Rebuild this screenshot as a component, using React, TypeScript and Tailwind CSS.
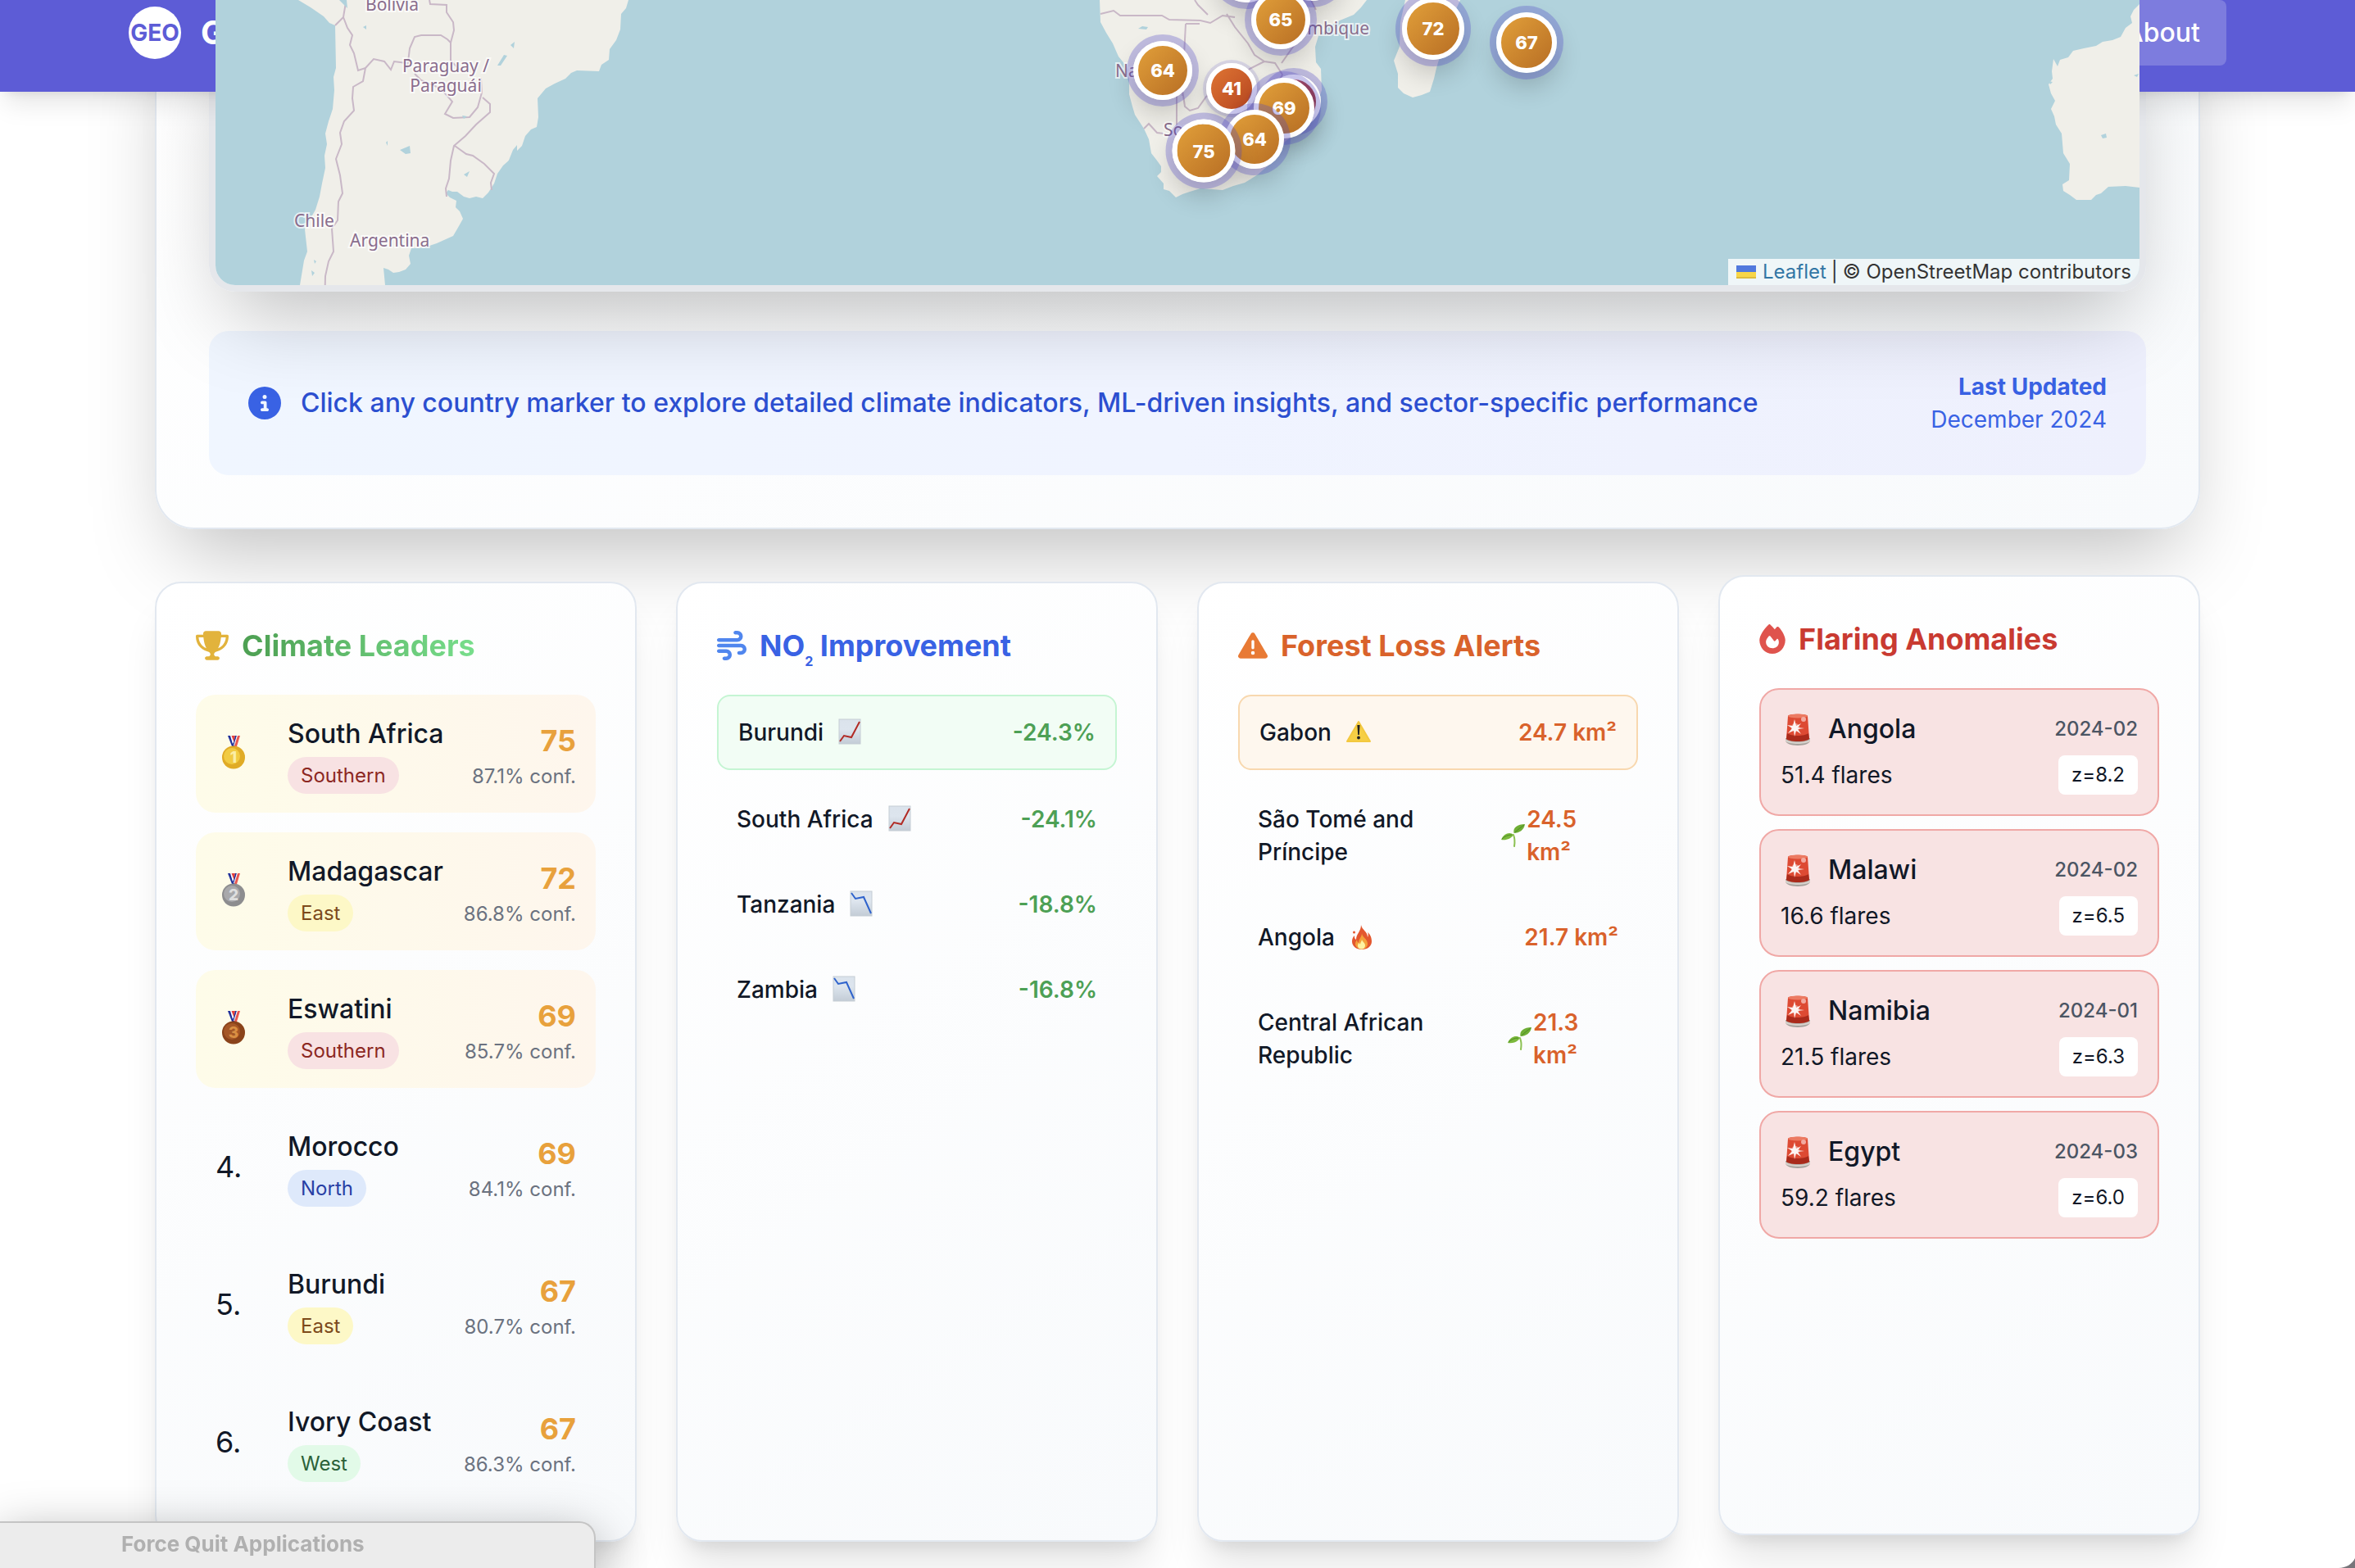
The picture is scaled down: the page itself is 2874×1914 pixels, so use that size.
import { FaCircleInfo, FaFire, FaTriangleExclamation, FaTrophy, FaWind } from 'react-icons/fa6';
import type { ReactNode } from 'react';

const leaders = [
  { rank: 1, name: 'South Africa', region: 'Southern', score: 75, conf: '87.1%' },
  { rank: 2, name: 'Madagascar', region: 'East', score: 72, conf: '86.8%' },
  { rank: 3, name: 'Eswatini', region: 'Southern', score: 69, conf: '85.7%' },
  { rank: 4, name: 'Morocco', region: 'North', score: 69, conf: '84.1%' },
  { rank: 5, name: 'Burundi', region: 'East', score: 67, conf: '80.7%' },
  { rank: 6, name: 'Ivory Coast', region: 'West', score: 67, conf: '86.3%' },
];

const regionStyles: Record<string, string> = {
  Southern: 'bg-[#f8e2e3] text-[#8c2822]',
  East: 'bg-[#fdf8c7] text-[#7c4a1b]',
  North: 'bg-[#dee9fb] text-[#2840a5]',
  West: 'bg-[#e2fae8] text-[#2b6138]',
};

const no2 = [
  { name: 'Burundi', value: '-24.3%', icon: <ChartUp /> },
  { name: 'South Africa', value: '-24.1%', icon: <ChartUp /> },
  { name: 'Tanzania', value: '-18.8%', icon: <ChartDown /> },
  { name: 'Zambia', value: '-16.8%', icon: <ChartDown /> },
];

const forest = [
  { name: 'Gabon', value: '24.7 km²', icon: <Warning /> },
  { name: 'São Tomé and Príncipe', value: '24.5 km²', icon: <Seedling /> },
  { name: 'Angola', value: '21.7 km²', icon: <Flame /> },
  { name: 'Central African Republic', value: '21.3 km²', icon: <Seedling /> },
];

const flares = [
  { name: 'Angola', date: '2024-02', count: '51.4', z: '8.2' },
  { name: 'Malawi', date: '2024-02', count: '16.6', z: '6.5' },
  { name: 'Namibia', date: '2024-01', count: '21.5', z: '6.3' },
  { name: 'Egypt', date: '2024-03', count: '59.2', z: '6.0' },
];

// Marker centres are measured from the middle of the map
const markers = [
  { x: 84, y: -33, size: 72, score: '', tone: 'mid' },
  { x: 164, y: -35, size: 72, score: '', tone: 'mid' },
  { x: 126, y: 24, size: 72, score: '65', tone: 'mid' },
  { x: 312, y: 35, size: 76, score: '72', tone: 'mid' },
  { x: 426, y: 52, size: 74, score: '67', tone: 'mid' },
  { x: -18, y: 86, size: 72, score: '64', tone: 'mid' },
  { x: 66, y: 108, size: 62, score: '41', tone: 'low' },
  { x: 142, y: 124, size: 66, score: '', tone: 'bad' },
  { x: 130, y: 132, size: 74, score: '69', tone: 'mid' },
  { x: 94, y: 170, size: 72, score: '64', tone: 'mid' },
  { x: 32, y: 184, size: 77, score: '75', tone: 'mid' },
];

const markerTones: Record<string, string> = {
  mid: 'from-[#e5a43c] to-[#b46a22] shadow-[0_0_0_8px_rgba(79,70,200,0.3),0_16px_32px_rgba(0,0,0,0.2)]',
  low: 'from-[#e37a35] to-[#b2401f] shadow-[0_0_0_4px_rgba(79,70,200,0.15),0_8px_16px_rgba(0,0,0,0.2)]',
  bad: 'from-[#d0524a] to-[#8f2d28] shadow-[0_0_0_8px_rgba(79,70,200,0.3),0_16px_32px_rgba(0,0,0,0.2)]',
};

function Medal({ place }: { place: number }) {
  const fills = ['#e0ab26', '#8d8d8f', '#8a431a'];
  const lights = ['#f8d94e', '#b4b4b6', '#b0602c'];
  const digits = ['#fbeea6', '#dedede', '#d98f43'];
  return (
    <svg viewBox="0 0 44 44" className="size-11" role="img" aria-label={`Place ${place}`}>
      <path d="M15 0h4l4 13h-3z" fill="#20309b" />
      <path d="M18 0h3l2 6-2 4z" fill="#fff" />
      <path d="M19.500 0H24l-1.500 8z" fill="#e4403c" />
      <path d="M24 0h2l-3 13h-2z" fill="#20309b" />
      <path d="M26 0h1l-4 12h-1z" fill="#fff" />
      <path d="M27 0h3l-4 13h-3z" fill="#ea5750" />
      <circle cx="22" cy="26.500" r="14" fill={fills[place - 1]} />
      <circle cx="20" cy="25" r="10" fill={lights[place - 1]} opacity="0.7" />
      <text x="22" y="33" textAnchor="middle" fontFamily="Inter, sans-serif" fontWeight="800" fontSize="19" fill={digits[place - 1]}>
        {place}
      </text>
    </svg>
  );
}

function ChartSheet({ children }: { children: ReactNode }) {
  return (
    <svg viewBox="2 1 34 36" className="h-9 w-[34px] shrink-0" aria-hidden="true">
      <defs>
        <linearGradient id="sheet" x1="0" y1="0" x2="0" y2="1">
          <stop offset="0" stopColor="#dbe3ec" />
          <stop offset="0.4" stopColor="#dde5ee" />
          <stop offset="1" stopColor="#c3ccd6" />
        </linearGradient>
      </defs>
      <rect x="5" y="3" width="26" height="30" fill="url(#sheet)" stroke="#c5cdd4" strokeWidth="1" />
      {children}
    </svg>
  );
}

function ChartUp() {
  return (
    <ChartSheet>
      <path d="M6 30 11 23l9 2L30 6" fill="none" stroke="#b12b26" strokeWidth="2" />
    </ChartSheet>
  );
}

function ChartDown() {
  return (
    <ChartSheet>
      <path d="M6 5l5 7 10-2 9 20" fill="none" stroke="#2f63cc" strokeWidth="2" />
    </ChartSheet>
  );
}

function Warning() {
  return (
    <svg viewBox="1 0 34 36" className="h-9 w-[34px] shrink-0" aria-hidden="true">
      <path d="M18 5 32 29H4z" fill="#f6cf45" stroke="#f3c83f" strokeWidth="2" strokeLinejoin="round" />
      <path d="M16.4 9h3.2l-.8 12h-1.6z" fill="#222" />
      <circle cx="18" cy="24.500" r="1.900" fill="#222" />
    </svg>
  );
}

function Seedling() {
  return (
    <svg viewBox="1 0 34 36" className="h-9 w-[34px] shrink-0" aria-hidden="true">
      <path d="M20 31c1-6 1-9-1-14" fill="none" stroke="#8cc152" strokeWidth="2" strokeLinecap="round" />
      <path d="M19.500 15C18 8 24 4 33 4c-1 7-7 11-13.500 11z" fill="#6fae35" />
      <path d="M21 14c4-4 7-6 11-9" stroke="#4d8c24" strokeWidth="1" fill="none" />
      <path d="M19 17c-4-4-12-2-15 6 6 1 12-1 15-6z" fill="#7cb93c" />
      <path d="M17 17c-5 0-9 2-12 5" stroke="#4d8c24" strokeWidth="1" fill="none" />
    </svg>
  );
}

function Flame() {
  return (
    <svg viewBox="1 0 34 36" className="h-9 w-[34px] shrink-0" aria-hidden="true">
      <path d="M17 3c1 6 8 8 8 15 1-2 1-4 0-6 4 3 5 8 5 11 0 6-5 10-12 10S6 29 6 23c0-3 1-5 3-7 0 2 0 4 2 5 0-7 6-10 6-18z" fill="#e3572f" />
      <circle cx="8.500" cy="12" r="1.500" fill="#e3572f" />
      <path d="M18 13c0 5 7 7 7 13 0 4-3 6.500-7 6.500S10 30 10 26c0-2 1-3 2-5 0 2 1 3 2 4 0-5 4-7 4-12z" fill="#f4a03a" />
      <path d="M18 21c1 3 4 4 4 7s-2 4.500-4.500 4.500S13 31 13 28.500c0-2 1-3 1.500-4 0 1 1 2 1.500 2 0-2 1.500-3 2-5.500z" fill="#fdf3a3" />
    </svg>
  );
}

function Siren() {
  return (
    <svg viewBox="-1 0 42 44" className="h-11 w-[42px] shrink-0" aria-hidden="true">
      <path d="M5 33h30v3c0 3-6 6-15 6S5 39 5 36z" fill="#a5a19c" />
      <path d="M5 34c5 5 25 5 30 0v3c-5 4-25 4-30 0z" fill="#d5d0ca" />
      <path d="M8 6c0-3 24-3 24 0l2 28c-5 4-23 4-28 0z" fill="#dd4a33" />
      <path d="M7 27l-1 7c5 4 23 4 28 0l-1-7c-5 4-21 4-26 0z" fill="#a92a1b" />
      <ellipse cx="20" cy="6" rx="12" ry="2.500" fill="#ec7a62" />
      <circle cx="27" cy="10" r="3" fill="#f2aaa0" />
      <path d="M16 10l2 8 6-3-4 5 8 1-8 1 4 6-6-4-2 7-1-7-7 3 5-6-6-4 7 1z" fill="#fff" opacity="0.9" />
      <circle cx="17" cy="20" r="5" fill="#fff" opacity="0.4" />
    </svg>
  );
}

function WorldMap() {
  return (
    <svg
      viewBox="263 0 2348 348"
      preserveAspectRatio="xMidYMax slice"
      className="block h-[348px] w-full"
      role="img"
      aria-label="Map of the southern hemisphere"
    >
      <rect x="0" y="0" width="2874" height="348" fill="#b1d2dc" />
      <g fill="#f0efe9">
        <path d="M364 0 379 9 395 20 402 28 409 31 410 83 407 94 408 110 406 133 401 148 397 163 399 176 396 190 397 205 393 224 390 240 385 256 381 263 372 280 375 307 371 318 369 330 366 348H470L468 327 474 329 480 333 487 332 495 329 501 322 499 312 502 303 518 302 533 297 553 288 560 276 565 267 561 258 556 253 557 245 549 241 544 236 547 232 552 234 558 234 566 240 573 242 581 240 589 242 596 235 603 224 607 212 614 202 622 195 631 184 637 178 641 166 648 158 655 155 657 143 656 120 666 108 677 102 690 96 697 89 704 86 731 87 734 79 743 73 744 60 752 49 757 36 758 17 764 10 767 0Z" />
        <path d="M1342 0 1343 27 1350 40 1358 53 1365 69 1374 80 1378 96 1378 115 1382 130 1385 140 1396 157 1402 170 1405 187 1412 196 1417 203 1417 210 1412 215 1420 224 1420 231 1427 233 1435 241 1443 237 1452 234 1465 230 1492 232 1505 227 1519 223 1535 213 1550 200 1560 187 1568 173 1585 160 1598 145 1607 128 1613 110 1612 84 1606 76 1605 57 1609 44 1621 33 1635 25 1652 18 1661 9 1668 0Z" />
        <path d="M1715 0 1709 27 1708 57 1701 74 1706 90 1706 107 1713 114 1724 119 1735 116 1745 112 1750 96 1753 83 1763 50 1773 20 1782 0Z" />
        <path d="M2611 5 2604 12 2600 20 2602 28 2594 34 2588 45 2578 49 2566 51 2558 56 2543 59 2530 62 2524 70 2514 73 2511 81 2506 72 2504 87 2505 96 2500 103 2503 114 2508 123 2503 133 2507 142 2509 152 2516 163 2518 187 2526 200 2525 220 2517 225 2518 233 2526 238 2534 244 2552 244 2558 238 2564 236 2573 228 2594 227 2611 229Z" />
      </g>
      <g fill="none" stroke="#c9b8c7" strokeWidth="2">
        <path d="M409 31l10-10 3-18-5-3M419 21l5 13 6 9-3 12 5 10 5 21 9-3-3 16-12 7-1 14 2 15-12 13-5 14 2 14-7 18 5 20 3 22-5 10-1 23-7 10 2 28-6 12-4 18-1 43" />
        <path d="M446 83 456 72l13 3 8 10 4-10 15 2M524 0l1 5 20 1v9l8 12 1 10-4 15-4-4-8-5H514l-8 2-6 14-3 25M550 52v22l12 12M506 90l8 8 24 10 14 16-9 15 10 5 20-1 10-12 5-18-1-18M589 119l9 8v10l-17 15-13 14-14 12-4 18-2 22-4 12 1 10M555 178l14 10 8 2 14 10 12 12-4 11 1 9" />
        <path d="M1343 17l16-4 8 6h51l9 5 38 1 12 3 15-9 15 2M1458 0l4 6 12 12M1447 29h17M1447 29l-2 38-2 50M1443 110l3 20 6 5 10-3 10-14 8-5M1436 115v43M1396 157l6-6 10 11 8 1M1497 17l10 16 16 20 8 14 12 8 13 2 9 14-3 6M1543 75l-18 9-12 15M1564 77l14-20 5-17M1606 12l-6-12" />
      </g>
      <g fill="#b1d2dc">
        <path d="M414 0l10 10-1-10zM488 183l12-5 1 9-6 1zM443 33l4-2v5zM471 174l2-2v6zM607 80l8-13 4 1-8 12zM623 55l5-4-1 8zM570 142l-6-1 2 4zM626 183l5-6v9l-9 14-2-2zM566 213l7-4-3 7zM383 317l3 2-2 3zM380 330l4 3-3 4zM1389 35l5-3 7 1-2 3zM2604 92l6-2-2 4zM2564 165l6-2 1 5-5 1zM2500 99l5 1-3 3z" />
      </g>
      <g
        fill="#8a6d8d"
        stroke="#ffffff"
        strokeOpacity="0.7"
        strokeWidth="4"
        paintOrder="stroke"
        fontFamily="'Noto Sans', sans-serif"
        fontSize="21"
      >
        <text x="446" y="13">Bolivia</text>
        <text x="544" y="88" textAnchor="middle">Paraguay /</text>
        <text x="544" y="112" textAnchor="middle">Paraguái</text>
        <text x="359" y="277">Chile</text>
        <text x="427" y="301">Argentina</text>
        <text x="1361" y="94">Namibia</text>
        <text x="1420" y="166">South</text>
        <text x="1671" y="42" textAnchor="end">Mozambique</text>
      </g>
    </svg>
  );
}

function Card({ icon, title, titleClass, className = '', children }: {
  icon: ReactNode;
  title: ReactNode;
  titleClass: string;
  className?: string;
  children: ReactNode;
}) {
  return (
    <section
      className={`rounded-[32px] border-2 border-[#e2e8f0] bg-linear-145 from-white to-[#f8fafc] p-12 shadow-[0_40px_50px_-10px_rgba(0,0,0,0.1),0_16px_20px_-12px_rgba(0,0,0,0.1)] ${className}`}
    >
      <h3 className="mb-8 flex items-center gap-4 text-[36px] leading-[56px] font-bold">
        {icon}
        <span className={titleClass}>{title}</span>
      </h3>
      {children}
    </section>
  );
}

function StatList({ rows, firstClass, valueClass }: {
  rows: { name: string; value: string; icon: ReactNode }[];
  firstClass: string;
  valueClass: string;
}) {
  return (
    <ul className="space-y-4">
      {rows.map((row, i) => (
        <li
          key={row.name}
          className={`flex items-center justify-between rounded-2xl p-6 text-[28px] leading-10 ${i === 0 ? firstClass : ''}`}
        >
          <div className="flex items-center gap-4 font-medium">
            <span>{row.name}</span>
            {row.icon}
          </div>
          <span className={valueClass}>{row.value}</span>
        </li>
      ))}
    </ul>
  );
}

export default function App() {
  return (
    <div className="relative min-h-screen overflow-hidden bg-white font-['Inter',sans-serif] text-[32px] leading-[48px] text-[#111827]">
      <header className="absolute inset-x-0 top-0 z-10 bg-[#5d5cd6] pb-8 shadow-[0_20px_30px_-6px_rgba(0,0,0,0.1),0_8px_12px_-8px_rgba(0,0,0,0.1)]">
        <div className="mx-auto flex h-20 max-w-[2560px] items-center justify-between">
          <div className="flex items-center gap-6 text-white">
            <div className="flex size-16 items-center justify-center rounded-full bg-white text-[28px] font-bold text-[#5d5cd6]">
              GEO
            </div>
            <span className="text-[40px] font-bold">G</span>
          </div>
          <a href="#about" className="rounded-lg bg-white/20 px-8 py-4 font-medium text-white">
            About
          </a>
        </div>
      </header>

      <main className="mx-auto max-w-[2560px] px-8 pb-8">
        <section className="rounded-b-[48px] border-2 border-t-0 border-[#e2e8f0] bg-linear-145 from-white to-[#f8fafc] px-16 pb-16 shadow-[0_50px_100px_-24px_rgba(0,0,0,0.25)]">
          <div className="relative mb-12 rounded-b-[32px] border-8 border-t-0 border-[#e5e7eb] shadow-[0_50px_100px_-24px_rgba(0,0,0,0.25)]">
            {/* The map panes stay above the header while scrolling */}
            <div className="relative z-20 overflow-hidden rounded-b-3xl">
              <WorldMap />
              {markers.map((m, i) => (
                <button
                  key={i}
                  type="button"
                  aria-label={`Country score ${m.score}`}
                  className={`absolute flex -translate-1/2 items-center justify-center rounded-full border-6 border-white bg-linear-135 bg-origin-border text-[22px] leading-none font-extrabold text-white ${markerTones[m.tone]}`}
                  style={{ left: `calc(50% + ${m.x}px)`, top: m.y, width: m.size, height: m.size }}
                >
                  {m.score}
                </button>
              ))}
              <div className="absolute right-0 bottom-0 flex h-8 items-center gap-1.5 bg-white/80 px-2.5 text-[24px] leading-8 text-[#333333]">
                <a href="#leaflet" className="flex items-center gap-2 text-[#3276a5]">
                  <svg viewBox="0 0 24 16" className="h-4 w-6" aria-hidden="true">
                    <path fill="#5179dd" d="M0 0h24v8H0z" />
                    <path fill="#f8d648" d="M0 8h24v6H0z" />
                    <path fill="#dfbc3c" d="M0 14h24v2H0z" />
                  </svg>
                  Leaflet
                </a>
                <span>|</span>
                <span>© OpenStreetMap contributors</span>
              </div>
            </div>
          </div>

          <div className="flex items-center justify-between rounded-3xl bg-linear-to-r from-[#f0f6ff] via-[#f0f4ff] to-[#eef0fd] p-12">
            <div className="flex items-center gap-6 font-medium text-[#2c4fd0]">
              <FaCircleInfo className="size-10 text-[#3962e4]" />
              <p>Click any country marker to explore detailed climate indicators, ML-driven insights, and sector-specific performance</p>
            </div>
            <div className="text-right text-[28px] leading-10 text-[#3962e4]">
              <p className="font-bold">Last Updated</p>
              <p>December 2024</p>
            </div>
          </div>
        </section>

        <div className="relative mt-16 grid grid-cols-4 gap-12">
          <Card
            icon={<FaTrophy className="h-9 w-10 text-[#e2b33c]" />}
            title="Climate Leaders"
            titleClass="bg-linear-to-r from-[#4d9f52] to-[#78de8c] bg-clip-text text-transparent"
          >
            <ol className="space-y-6">
              {leaders.map((l) => (
                <li
                  key={l.rank}
                  className={`flex items-center rounded-3xl p-6 ${l.rank <= 3 ? 'bg-linear-to-r from-[#fefce9] to-[#fef6ed]' : ''}`}
                >
                  <div className="mr-6 w-16 text-[36px]">
                    {l.rank <= 3 ? <Medal place={l.rank} /> : `${l.rank}.`}
                  </div>
                  <div className="flex-1">
                    <p className="font-medium">{l.name}</p>
                    <div>
                      <span className={`rounded-full px-4 py-2 text-[24px] leading-8 ${regionStyles[l.region]}`}>{l.region}</span>
                    </div>
                  </div>
                  <div className="text-right">
                    <p className="text-[36px] leading-[56px] font-bold text-[#e8a13c]">{l.score}</p>
                    <p className="text-[24px] leading-8 text-[#6b7280]">{l.conf} conf.</p>
                  </div>
                </li>
              ))}
            </ol>
          </Card>

          <Card
            icon={<FaWind className="text-[#5086ee]" />}
            title={<>NO<sub className="-bottom-3 text-base leading-none">2</sub> Improvement</>}
            titleClass="text-[#3962e4]"
          >
            <StatList
              rows={no2}
              firstClass="border-2 border-[#c5f5d3] bg-[#f2fdf5]"
              valueClass="font-semibold text-[#4da055]"
            />
          </Card>

          <Card
            icon={<FaTriangleExclamation className="text-[#e87a35]" />}
            title="Forest Loss Alerts"
            titleClass="text-[#d9622b]"
          >
            <StatList
              rows={forest}
              firstClass="border-2 border-[#f8d8af] bg-[#fef7ee]"
              valueClass="font-semibold text-[#d9622b]"
            />
          </Card>

          {/* Lifted: this card is in its hover state */}
          <Card
            icon={<FaFire className="h-9 w-8 text-[#df534d]" />}
            title="Flaring Anomalies"
            titleClass="text-[#c93a31]"
            className="-translate-y-2"
          >
            <ul className="space-y-4">
              {flares.map((f) => (
                <li key={f.name} className="rounded-3xl border-2 border-[#f0a8a6] bg-[#f8e3e3] p-6">
                  <div className="mb-2 flex items-center justify-between">
                    <div className="flex items-center gap-4 font-medium">
                      <Siren />
                      {f.name}
                    </div>
                    <span className="text-[24px] leading-8 font-medium text-[#4b5563]">{f.date}</span>
                  </div>
                  <div className="flex items-center justify-between">
                    <span className="text-[28px] leading-10">{f.count} flares</span>
                    <span className="rounded-lg bg-white px-4 py-2 text-[24px] leading-8">z={f.z}</span>
                  </div>
                </li>
              ))}
            </ul>
          </Card>
        </div>
      </main>

      {/* Title bar of a desktop window that overlaps the page */}
      <div className="fixed bottom-0 left-0 z-30 h-[57px] w-[727px] rounded-tr-[20px] border-t-2 border-r-2 border-[#c4c4c4] bg-[#ececec] pl-[148px] text-[26px] leading-[52px] font-bold text-[#b0b0b0] shadow-[0_16px_60px_rgba(0,0,0,0.35)]">
        Force Quit Applications
      </div>
      <svg viewBox="0 0 20 12" className="fixed right-0 bottom-0 z-30 h-3 w-5" aria-hidden="true">
        <path d="M0 12C9 12 17 7 20 0v12z" fill="#77757a" />
      </svg>
    </div>
  );
}
